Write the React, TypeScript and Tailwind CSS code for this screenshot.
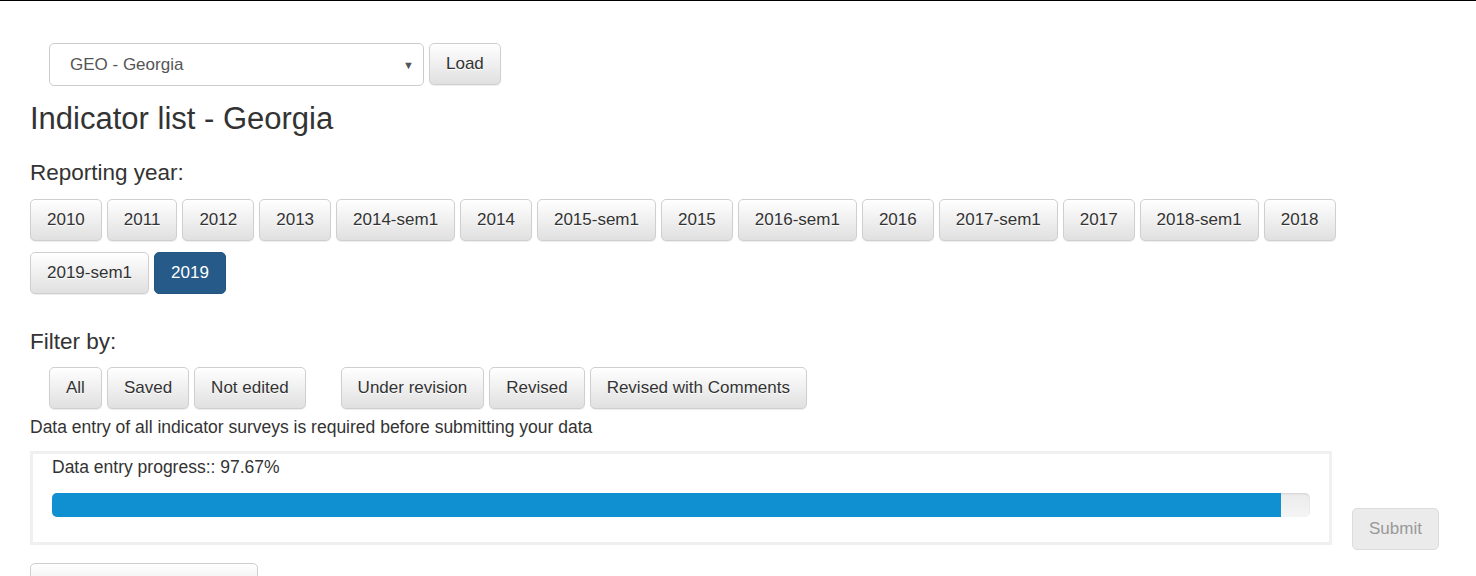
import { useState } from 'react'

const years = [
  '2010', '2011', '2012', '2013', '2014-sem1', '2014', '2015-sem1', '2015',
  '2016-sem1', '2016', '2017-sem1', '2017', '2018-sem1', '2018', '2019-sem1', '2019',
]

const btn =
  'h-[42px] px-4 text-[17px] leading-[20px] text-[#333] rounded-[5px] border border-[#cfcfcf] bg-gradient-to-b from-[#ffffff] to-[#e0e0e0] shadow-[0_1px_1px_rgba(0,0,0,0.075)] [text-shadow:0_1px_0_#fff]'

function Btn({ label, active, onClick }: { label: string; active?: boolean; onClick?: () => void }) {
  if (active) {
    return (
      <button
        onClick={onClick}
        className="h-[42px] px-4 text-[17px] leading-[20px] text-white rounded-[5px] border border-[#245580] bg-[#265a88]"
      >
        {label}
      </button>
    )
  }
  return (
    <button onClick={onClick} className={btn}>
      {label}
    </button>
  )
}

export default function App() {
  const [year, setYear] = useState('2019')
  const progress = 97.67

  return (
    <div className="min-h-[576px] border-t border-black bg-white text-[#333] font-['Liberation_Sans',Arial,sans-serif]">
      <div className="pl-[30px]">
        {/* country picker */}
        <div className="flex gap-[5px] pt-[42px] pl-[19px]">
          <div className="relative w-[375px] h-[43px] rounded-[5px] border border-[#ccc] bg-white flex items-center">
            <span className="pl-[20px] text-[17px] text-[#555]">GEO - Georgia</span>
            <span className="absolute right-[9px] top-[13px] text-[11px] text-[#555]">▼</span>
          </div>
          <Btn label="Load" />
        </div>

        <h1 className="mt-[15px] text-[31px] leading-[36px]">Indicator list - Georgia</h1>

        <h2 className="mt-[23px] text-[22.5px] leading-[26px]">Reporting year:</h2>
        <div className="mt-[13px] w-[1310px] flex flex-wrap gap-x-[5px] gap-y-[11px]">
          {years.map((y) => (
            <Btn key={y} label={y} active={y === year} onClick={() => setYear(y)} />
          ))}
        </div>

        <h2 className="mt-[35px] text-[22.5px] leading-[26px]">Filter by:</h2>
        <div className="mt-[12px] pl-[19px] flex gap-[35px]">
          <div className="flex gap-[5px]">
            <Btn label="All" />
            <Btn label="Saved" />
            <Btn label="Not edited" />
          </div>
          <div className="flex gap-[5px]">
            <Btn label="Under revision" />
            <Btn label="Revised" />
            <Btn label="Revised with Comments" />
          </div>
        </div>

        <p className="mt-[7px] text-[17.5px] leading-[22px]">
          Data entry of all indicator surveys is required before submitting your data
        </p>

        <div className="mt-[13px] flex gap-[20px]">
          <div className="w-[1302px] h-[94px] border-[3px] border-[#f0f0f0] px-[19px] pt-[2px]">
            <div className="text-[17.5px] leading-[22px]">Data entry progress:: {progress}%</div>
            <div className="mt-[15px] h-[24px] rounded-[5px] bg-gradient-to-b from-[#ebebeb] to-[#f5f5f5] shadow-[inset_0_1px_2px_rgba(0,0,0,0.1)] overflow-hidden">
              <div className="h-full bg-[#1190d1]" style={{ width: `${progress}%` }} />
            </div>
          </div>
          <button
            disabled
            className="mt-[57px] h-[42px] w-[87px] text-[17px] leading-[20px] text-[#999] rounded-[5px] border border-[#dcdcdc] bg-[#ebebeb]"
          >
            Submit
          </button>
        </div>

        <div className="mt-[13px] w-[228px] h-[42px] rounded-[5px] border border-[#cfcfcf] bg-gradient-to-b from-[#ffffff] to-[#e0e0e0]" />
      </div>
    </div>
  )
}
